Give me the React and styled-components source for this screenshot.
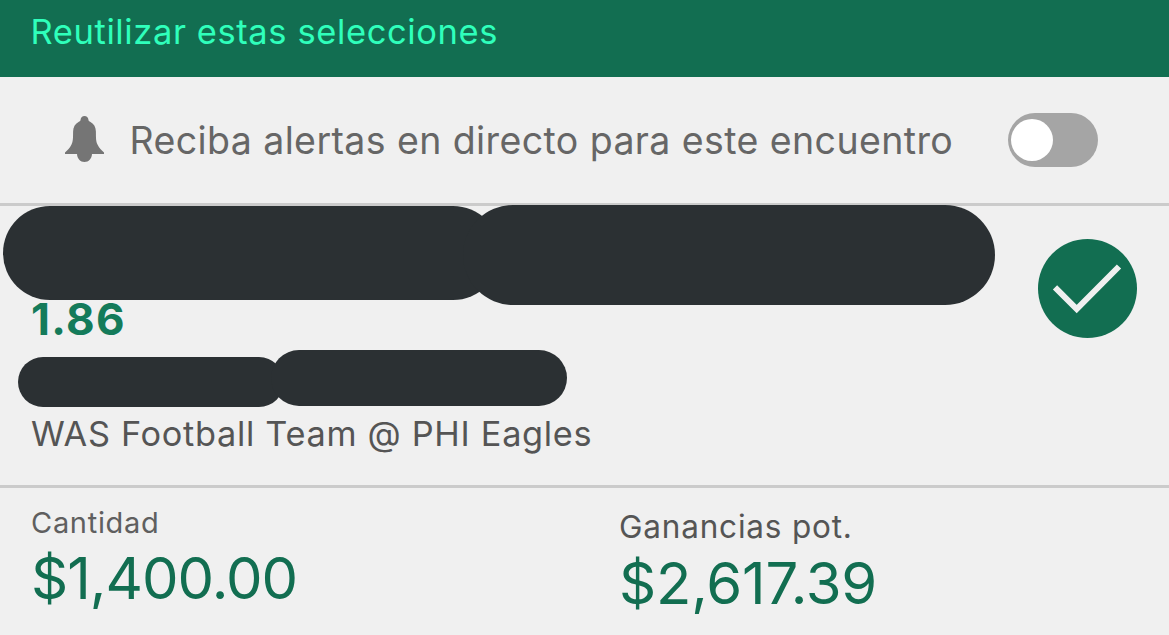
import React from 'react';
import styled, { createGlobalStyle } from 'styled-components';

const GlobalStyle = createGlobalStyle`
  * {
    box-sizing: border-box;
  }

  body {
    margin: 0;
    background: #f0f0f0;
    font-family: Inter, "Liberation Sans", sans-serif;
  }
`;

const Slip = styled.main`
  display: flex;
  flex-direction: column;
  width: 1169px;
  height: 635px;
  overflow: hidden;
  background: #f0f0f0;
`;

const Text = styled.span`
  display: block;
  white-space: nowrap;
  color: ${props => props.$color};
  font-size: ${props => props.$size}px;
  line-height: ${props => props.$line || 40}px;
  font-weight: ${props => props.$weight || 400};
  letter-spacing: ${props => props.$spacing || 0}px;
`;

const Header = styled.header`
  height: 77px;
  padding: 12px 30.5px 0;
  background: #126e51;
`;

const Alerts = styled.section`
  display: flex;
  align-items: center;
  height: 129px;
  padding: 0 71px 0 65px;
  border-bottom: 3px solid #cbcbcb;
`;

const AlertsLabel = styled.div`
  padding-top: 2px;
`;

const Bell = styled.svg`
  width: 39px;
  height: 46px;
  margin: -2px 25.5px 0 0;
  fill: #757575;
`;

const Switch = styled.button`
  display: flex;
  align-items: center;
  width: 90px;
  height: 54px;
  margin-left: auto;
  padding: 0 3px;
  border: 0;
  border-radius: 27px;
  background: #a5a5a5;
`;

const Knob = styled.span`
  width: 42px;
  height: 42px;
  border-radius: 50%;
  background: #fff;
`;

const Selection = styled.section`
  display: flex;
  justify-content: space-between;
  height: 282px;
  padding-right: 32px;
  border-bottom: 3px solid #cbcbcb;
`;

const Details = styled.div`
  display: flex;
  flex-direction: column;
`;

const HiddenLine = styled.div`
  display: flex;
  align-items: flex-start;
  height: ${props => props.$height}px;
  margin-left: ${props => props.$left}px;
`;

const Pill = styled.span`
  flex: none;
  width: ${props => props.$width}px;
  height: ${props => props.$height}px;
  margin: ${props => props.$margin || '0'};
  border-radius: ${props => props.$height / 2}px;
  background: #2b3033;
`;

const Odds = styled.div`
  height: 53px;
  margin-top: -8px;
  padding-left: 31px;
`;

const Match = styled.div`
  margin-top: 8px;
  padding-left: 31px;
`;

const Check = styled.svg`
  width: 99px;
  height: 99px;
  margin-top: 33px;
`;

const Totals = styled.section`
  display: grid;
  grid-template-columns: 588px 1fr;
  padding-left: 31px;
`;

const Total = styled.div`
  display: flex;
  flex-direction: column;
  gap: ${props => props.$gap}px;
  padding-top: ${props => props.$top}px;
`;

const App = () => (
  <Slip>
    <GlobalStyle />
    <Header>
      <Text $color="#2fffbb" $size={34.5} $spacing={0.6}>Reutilizar estas selecciones</Text>
    </Header>

    <Alerts>
      <Bell viewBox="0 0 39 46">
        <path d="M19.5 0C17.300 0 15.800 1.500 15.500 4C15.400 5 14.500 5.400 13.500 6C10 8 8.200 11 8.100 15.500C8 22 8.200 25 6.500 28.500C4.800 32 2.500 34.300 0 36.500V38H12C12.300 42.600 15.200 46 19.500 46S26.700 42.600 27 38H39V36.500C36.500 34.300 34.200 32 32.500 28.500C30.800 25 31 22 30.900 15.500C30.800 11 29 8 25.500 6C24.500 5.400 23.600 5 23.500 4C23.200 1.500 21.700 0 19.500 0Z" />
      </Bell>
      <AlertsLabel>
        <Text $color="#666" $size={37.5} $spacing={0.4}>Reciba alertas en directo para este encuentro</Text>
      </AlertsLabel>
      <Switch role="switch" aria-checked="false">
        <Knob />
      </Switch>
    </Alerts>

    <Selection>
      <Details>
        <HiddenLine $left={3} $height={99}>
          <Pill $width={497} $height={94} />
          <Pill $width={532} $height={100} $margin="-1px 0 0 -37px" />
        </HiddenLine>
        <Odds>
          <Text $color="#147b5a" $size={44} $line={44} $weight={700} $spacing={1.3}>1.86</Text>
        </Odds>
        <HiddenLine $left={18} $height={56}>
          <Pill $width={266} $height={50} $margin="7px 0 0" />
          <Pill $width={296} $height={56} $margin="0 0 0 -13px" />
        </HiddenLine>
        <Match>
          <Text $color="#555" $size={34.3} $spacing={0.7}>WAS Football Team @ PHI Eagles</Text>
        </Match>
      </Details>
      <Check viewBox="0 0 99 99">
        <circle cx="49.5" cy="49.5" r="49.5" fill="#126e51" />
        <path d="M17 48.300L38.700 70L81 27.500" fill="none" stroke="#f0f0f0" strokeWidth="6" />
      </Check>
    </Selection>

    <Totals>
      <Total $top={17} $gap={5}>
        <Text $color="#5f5f5f" $size={29} $line={36} $spacing={0.7}>Cantidad</Text>
        <Text $color="#126e51" $size={58} $line={64} $spacing={-1}>$1,400.00</Text>
      </Total>
      <Total $top={21} $gap={6}>
        <Text $color="#555" $size={31.5} $line={36} $spacing={0.8}>Ganancias pot.</Text>
        <Text $color="#126e51" $size={58} $line={64} $spacing={-0.2}>$2,617.39</Text>
      </Total>
    </Totals>
  </Slip>
);

export default App;
